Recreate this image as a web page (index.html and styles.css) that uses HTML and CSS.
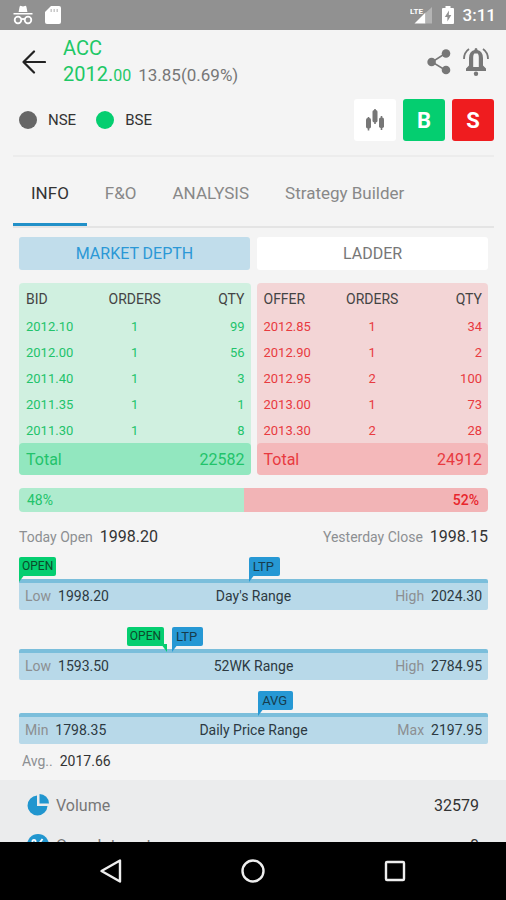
FILE: index.html
```html
<!DOCTYPE html>
<html lang="en">
<head>
<meta charset="utf-8">
<meta name="viewport" content="width=device-width, initial-scale=1">
<title>ACC</title>
<link rel="stylesheet" href="styles.css">
</head>
<body>
<div class="app">
  <div class="status">
    <div class="status-group">
      <svg width="20" height="20" viewBox="0 0 20 20" fill="#fff"><path d="M5.6 7 6.6 1.8Q7 .6 8.2.9L10 1.4 11.8.9Q13 .6 13.4 1.8L14.4 7zM.5 8h19v1.6H.5z"/><g fill="none" stroke="#fff" stroke-width="1.8"><circle cx="5" cy="15" r="3.3"/><circle cx="15" cy="15" r="3.3"/><path d="M8.3 14.6Q10 13.2 11.7 14.6"/></g></svg>
      <svg width="16" height="20" viewBox="0 0 16 20"><path fill="#fff" d="M6 1h8q2 0 2 2v14q0 2-2 2H2q-2 0-2-2V7z"/><path stroke="#c4c4c4" stroke-width="1.4" d="M6.2 4v3M9.2 4v3M12.2 4v3"/></svg>
    </div>
    <div class="status-group status-right">
      <svg width="23" height="20" viewBox="0 0 23 20"><path fill="#fff" d="M15.500 7.500v11H4.500z"/><path fill="#b4b4b4" d="M15.500 8 22 2v16.500h-6.500z"/><text class="lte" x="0" y="9">LTE</text></svg>
      <svg width="12" height="20" viewBox="0 0 12 20"><path fill="#fff" d="M3.500 1h5v2H11q1 0 1 1v14q0 1-1 1H1q-1 0-1-1V4q0-1 1-1h2.500z"/><path fill="#919191" d="M7 5.500 2.800 12h2.600v4.500L9.300 10H6.800z"/></svg>
      <span class="clock">3:11</span>
    </div>
  </div>

  <main class="content">
    <header class="header">
      <div class="title-row">
        <button class="icon-btn back" aria-label="Back"><svg width="24" height="24" viewBox="0 0 24 24" fill="none" stroke="#222" stroke-width="2.200" stroke-linecap="round" stroke-linejoin="round"><path d="M12 1.500 1.500 12 12 22.500M1.500 12H23"/></svg></button>
        <div class="quote">
          <h1 class="symbol">ACC</h1>
          <p class="price">2012.<span class="decimals">00</span><span class="change">13.85(0.69%)</span></p>
        </div>
        <div class="actions">
          <button class="icon-btn" aria-label="Share"><svg width="24" height="26" viewBox="0 0 24 26" fill="#777"><path d="M19 4 5 13l14 8.500" fill="none" stroke="#777" stroke-width="1.500"/><circle cx="19" cy="4.500" r="4.300"/><circle cx="4.600" cy="13" r="4.300"/><circle cx="19" cy="21" r="4.300"/></svg></button>
          <button class="icon-btn" aria-label="Alerts"><svg width="26" height="28" viewBox="0 0 26 28" fill="#777"><path fill-rule="evenodd" d="M13 0q1.500 0 1.500 2Q20 3.500 20 10v7.500l3 3V23H3v-2.500l3-3V10Q6 3.500 11.500 2 11.500 0 13 0zM11.300 5.500Q10.200 6.500 10.200 9v10h5.600V9q0-2.500-1.100-3.500z"/><circle cx="13" cy="25.800" r="2.200"/><path d="M6 1Q1 4.500 1 11M20 1q5 3.500 5 10" fill="none" stroke="#777" stroke-width="1.800"/></svg></button>
        </div>
      </div>
      <div class="exchange-row">
        <label class="exchange"><input type="radio" name="exchange">NSE</label>
        <label class="exchange"><input type="radio" name="exchange" checked>BSE</label>
        <div class="trade">
          <button class="trade-btn chart" aria-label="Chart"><svg width="18" height="22" viewBox="0 0 18 22" fill="#777"><rect x="0" y="9" width="5" height="10.500" rx="1.800"/><path d="M1.700 8h1.600v13.500H1.700z"/><rect x="6.500" y="1" width="5" height="12.500" rx="1.800"/><path d="M8.200 0h1.600v15H8.200z"/><rect x="13" y="8.500" width="5" height="10.500" rx="1.800"/><path d="M14.700 7h1.600v14h-1.600z"/></svg></button>
          <button class="trade-btn buy">B</button>
          <button class="trade-btn sell">S</button>
        </div>
      </div>
    </header>

    <nav class="tabs">
      <a class="tab active" href="#info">INFO</a>
      <a class="tab" href="#fno">F&amp;O</a>
      <a class="tab" href="#analysis">ANALYSIS</a>
      <a class="tab" href="#strategy">Strategy Builder</a>
    </nav>

    <section class="panel" id="info">
      <div class="switch">
        <button class="switch-btn on">MARKET DEPTH</button>
        <button class="switch-btn">LADDER</button>
      </div>

      <div class="books">
        <table class="book bid">
          <thead><tr><th>BID</th><th>ORDERS</th><th>QTY</th></tr></thead>
          <tbody>
            <tr><td>2012.10</td><td>1</td><td>99</td></tr>
            <tr><td>2012.00</td><td>1</td><td>56</td></tr>
            <tr><td>2011.40</td><td>1</td><td>3</td></tr>
            <tr><td>2011.35</td><td>1</td><td>1</td></tr>
            <tr><td>2011.30</td><td>1</td><td>8</td></tr>
          </tbody>
          <tfoot><tr><td>Total</td><td></td><td>22582</td></tr></tfoot>
        </table>
        <table class="book offer">
          <thead><tr><th>OFFER</th><th>ORDERS</th><th>QTY</th></tr></thead>
          <tbody>
            <tr><td>2012.85</td><td>1</td><td>34</td></tr>
            <tr><td>2012.90</td><td>1</td><td>2</td></tr>
            <tr><td>2012.95</td><td>2</td><td>100</td></tr>
            <tr><td>2013.00</td><td>1</td><td>73</td></tr>
            <tr><td>2013.30</td><td>2</td><td>28</td></tr>
          </tbody>
          <tfoot><tr><td>Total</td><td></td><td>24912</td></tr></tfoot>
        </table>
      </div>

      <div class="ratio">
        <div class="ratio-bid" style="width:48%">48%</div>
        <div class="ratio-offer">52%</div>
      </div>

      <div class="closes">
        <p><span class="muted">Today Open</span><span class="big">1998.20</span></p>
        <p><span class="muted">Yesterday Close</span><span class="big">1998.15</span></p>
      </div>

      <div class="range">
        <div class="flags">
          <span class="flag open" style="left:0%">OPEN</span>
          <span class="flag ltp" style="left:49%">LTP</span>
        </div>
        <div class="track">
          <p><span class="muted">Low</span><span>1998.20</span></p>
          <p>Day's Range</p>
          <p><span class="muted">High</span><span>2024.30</span></p>
        </div>
      </div>

      <div class="range spaced">
        <div class="flags">
          <span class="flag open flip" style="left:23%">OPEN</span>
          <span class="flag ltp" style="left:32.600%">LTP</span>
        </div>
        <div class="track">
          <p><span class="muted">Low</span><span>1593.50</span></p>
          <p>52WK Range</p>
          <p><span class="muted">High</span><span>2784.95</span></p>
        </div>
      </div>

      <div class="range tight">
        <div class="flags">
          <span class="flag ltp" style="left:51%">AVG</span>
        </div>
        <div class="track">
          <p><span class="muted">Min</span><span>1798.35</span></p>
          <p>Daily Price Range</p>
          <p><span class="muted">Max</span><span>2197.95</span></p>
        </div>
      </div>
      <p class="average"><span class="muted">Avg..</span><span>2017.66</span></p>
    </section>

    <dl class="stats">
      <div class="stat">
        <svg width="22" height="22" viewBox="0 0 22 22" fill="#2196cf"><path d="M10 1.500V12h10.500A10 10 0 1 1 10 1.500z"/><path d="M12.500 0A9.500 9.500 0 0 1 22 9.500h-9.500z"/></svg>
        <dt>Volume</dt><dd>32579</dd>
      </div>
      <div class="stat">
        <svg width="22" height="22" viewBox="0 0 22 22"><circle cx="11" cy="11" r="11" fill="#2196cf"/><g fill="none" stroke="#fff" stroke-width="1.800"><path d="M15.500 5 6.500 17"/><circle cx="7" cy="7.500" r="1.600"/><circle cx="15" cy="14.500" r="1.600"/></g></svg>
        <dt>Open Interest</dt><dd>0</dd>
      </div>
    </dl>
  </main>

  <div class="system-nav">
    <button class="icon-btn" aria-label="Back"><svg width="24" height="26" viewBox="0 0 24 26" fill="none" stroke="#eee" stroke-width="2.400" stroke-linejoin="round"><path d="M21 2.500v21L2.500 13z"/></svg></button>
    <button class="icon-btn" aria-label="Home"><svg width="26" height="26" viewBox="0 0 26 26" fill="none" stroke="#eee" stroke-width="2.400"><circle cx="13" cy="13" r="10.500"/></svg></button>
    <button class="icon-btn" aria-label="Recent apps"><svg width="22" height="22" viewBox="0 0 22 22" fill="none" stroke="#eee" stroke-width="2.400"><rect x="2" y="2" width="18" height="18" rx="1"/></svg></button>
  </div>
</div>
</body>
</html>
```
FILE: styles.css
```css
* { box-sizing: border-box; }

body, h1, p, dl, dd { margin: 0; }

body {
  background: #f4f4f4;
  color: #333;
  font-family: Roboto, "Liberation Sans", sans-serif;
  font-size: 14px;
}

button { font-family: inherit; border: 0; cursor: pointer; }

svg { display: block; flex: none; }

.app {
  display: flex;
  flex-direction: column;
  height: 100vh;
}

.status {
  display: flex;
  align-items: center;
  justify-content: space-between;
  flex: none;
  height: 30px;
  padding: 0 10px 0 13px;
  background: #919191;
}

.status-group { display: flex; align-items: center; gap: 12px; }
.status-right { gap: 9px; }
.clock { color: #fff; font-size: 17px; font-weight: 500; }
.lte { fill: #fff; font-size: 8px; font-weight: 700; }

.content { flex: 1; min-height: 0; overflow: hidden; }

.header {
  margin: 0 12px 0 13px;
  padding: 5px 0 14px;
  border-bottom: 2px solid #ececec;
}

.title-row { display: flex; align-items: center; padding-left: 9px; }

.icon-btn { padding: 0; background: none; }

.quote { flex: 1; margin-left: 17px; color: #1ec866; }

.symbol { font-size: 20px; font-weight: 400; line-height: 26px; }
.price { font-size: 20px; font-weight: 400; line-height: 26px; }
.decimals { font-size: 16px; }
.change { margin-left: 7px; color: #777; font-size: 17px; }

.actions { display: flex; align-items: center; gap: 12px; padding-right: 5px; }

.exchange-row {
  display: flex;
  align-items: center;
  gap: 20px;
  margin-top: 10px;
  padding-left: 6px;
}

.exchange { display: flex; align-items: center; gap: 11px; font-size: 15px; }

.exchange input {
  appearance: none;
  width: 18px;
  height: 18px;
  margin: 0;
  border-radius: 50%;
  background: #666;
}
.exchange input:checked { background: #04ce70; }

.trade { display: flex; gap: 7px; margin-left: auto; }

.trade-btn {
  display: flex;
  align-items: center;
  justify-content: center;
  width: 42px;
  height: 42px;
  padding: 0;
  border-radius: 3px;
  color: #fff;
  font-size: 22px;
  font-weight: 700;
}
.chart { background: #fff; }
.buy { background: #04ce70; }
.sell { background: #ef1c1f; }

.tabs {
  display: flex;
  margin: 0 12px 0 13px;
  border-bottom: 2px solid #e4e4e4;
}

.tab {
  padding: 0 18px;
  color: #888;
  font-size: 17px;
  line-height: 72px;
  height: 69px;
  white-space: nowrap;
  text-decoration: none;
}
.tab.active { color: #333; box-shadow: inset 0 -3px #2190c8; }

.panel { padding: 9px 18px 9px 19px; }

.switch { display: grid; grid-template-columns: 1fr 1fr; gap: 7px; }

.switch-btn {
  height: 33px;
  border-radius: 3px;
  background: #fff;
  color: #777;
  font-size: 16px;
}
.switch-btn.on { background: #c1ddeb; color: #2b98d6; }

.books { display: grid; grid-template-columns: 1fr 1fr; gap: 6px; margin-top: 13px; }

.book {
  width: 100%;
  border-spacing: 0;
  border-radius: 4px;
  table-layout: fixed;
}
.book th, .book td { height: 26px; padding: 0; text-align: center; font-size: 13px; }
.book th { height: 30px; padding-top: 2px; color: #444; font-size: 14px; font-weight: 400; }
.book th:first-child, .book td:first-child { padding-left: 7px; text-align: left; }
.book th:last-child, .book td:last-child { padding-right: 6px; text-align: right; }
.book tfoot td { height: 32px; font-size: 16px; }
.book tfoot td:first-child { border-radius: 4px 0 0 4px; }
.book tfoot td:last-child { border-radius: 0 4px 4px 0; }

.bid { background: #d0f0e0; color: #22c36b; }
.bid tfoot td { background: #92e7bf; }
.offer { background: #f3d5d6; color: #e83a40; }
.offer tfoot td { background: #f4b8ba; }

.ratio {
  display: flex;
  margin-top: 13px;
  overflow: hidden;
  border-radius: 4px;
  line-height: 24px;
}
.ratio-bid { padding-left: 8px; background: #aeebce; color: #22c36b; }
.ratio-offer { flex: 1; padding-right: 9px; background: #f2b4b6; color: #e8262c; font-weight: 500; text-align: right; }

.closes {
  display: flex;
  justify-content: space-between;
  margin: 13px 0 8px;
  line-height: 24px;
}
.muted { margin-right: 7px; color: #8c8f92; }
.big { font-size: 16px; }

.range.spaced { margin-top: 17px; }
.range.tight { margin-top: 11px; }

.flags { position: relative; height: 22px; }

.flag {
  position: absolute;
  top: 0;
  padding: 0 3px;
  border-radius: 2px;
  color: #173c4c;
  font-size: 12px;
  line-height: 19px;
}
.flag::after {
  content: "";
  position: absolute;
  top: 17px;
  left: 0;
  border-top: 8px solid #2698d4;
  border-right: 6px solid transparent;
}
.flag.open { background: #04ce70; color: #0c4a2a; }
.flag.open::after { border-top-color: #04ce70; }
.flag.ltp { padding: 0 6px 0 4px; background: #2698d4; font-size: 13px; }
.flag.flip::after {
  right: -3px;
  left: auto;
  border-right: 0;
  border-left: 6px solid transparent;
}

.track {
  display: grid;
  grid-template-columns: 1fr auto 1fr;
  padding: 0 6px;
  border-top: 4px solid #7bbedb;
  border-radius: 2px;
  background: #b8d9e9;
  color: #2d3a42;
  line-height: 27px;
}
.track p:last-child { text-align: right; }

.average { margin-top: 7px; padding-left: 3px; line-height: 20px; }

.stats { padding: 5px 27px; background: #ebeced; }

.stat { display: flex; align-items: center; height: 40px; font-size: 16px; }
.stat dt { margin-left: 7px; color: #777; }
.stat dd { margin-left: auto; }

.system-nav {
  display: grid;
  grid-template-columns: repeat(3, 1fr);
  flex: none;
  height: 58px;
  padding: 0 40px;
  background: #000;
}
.system-nav .icon-btn { display: flex; align-items: center; justify-content: center; }
```
